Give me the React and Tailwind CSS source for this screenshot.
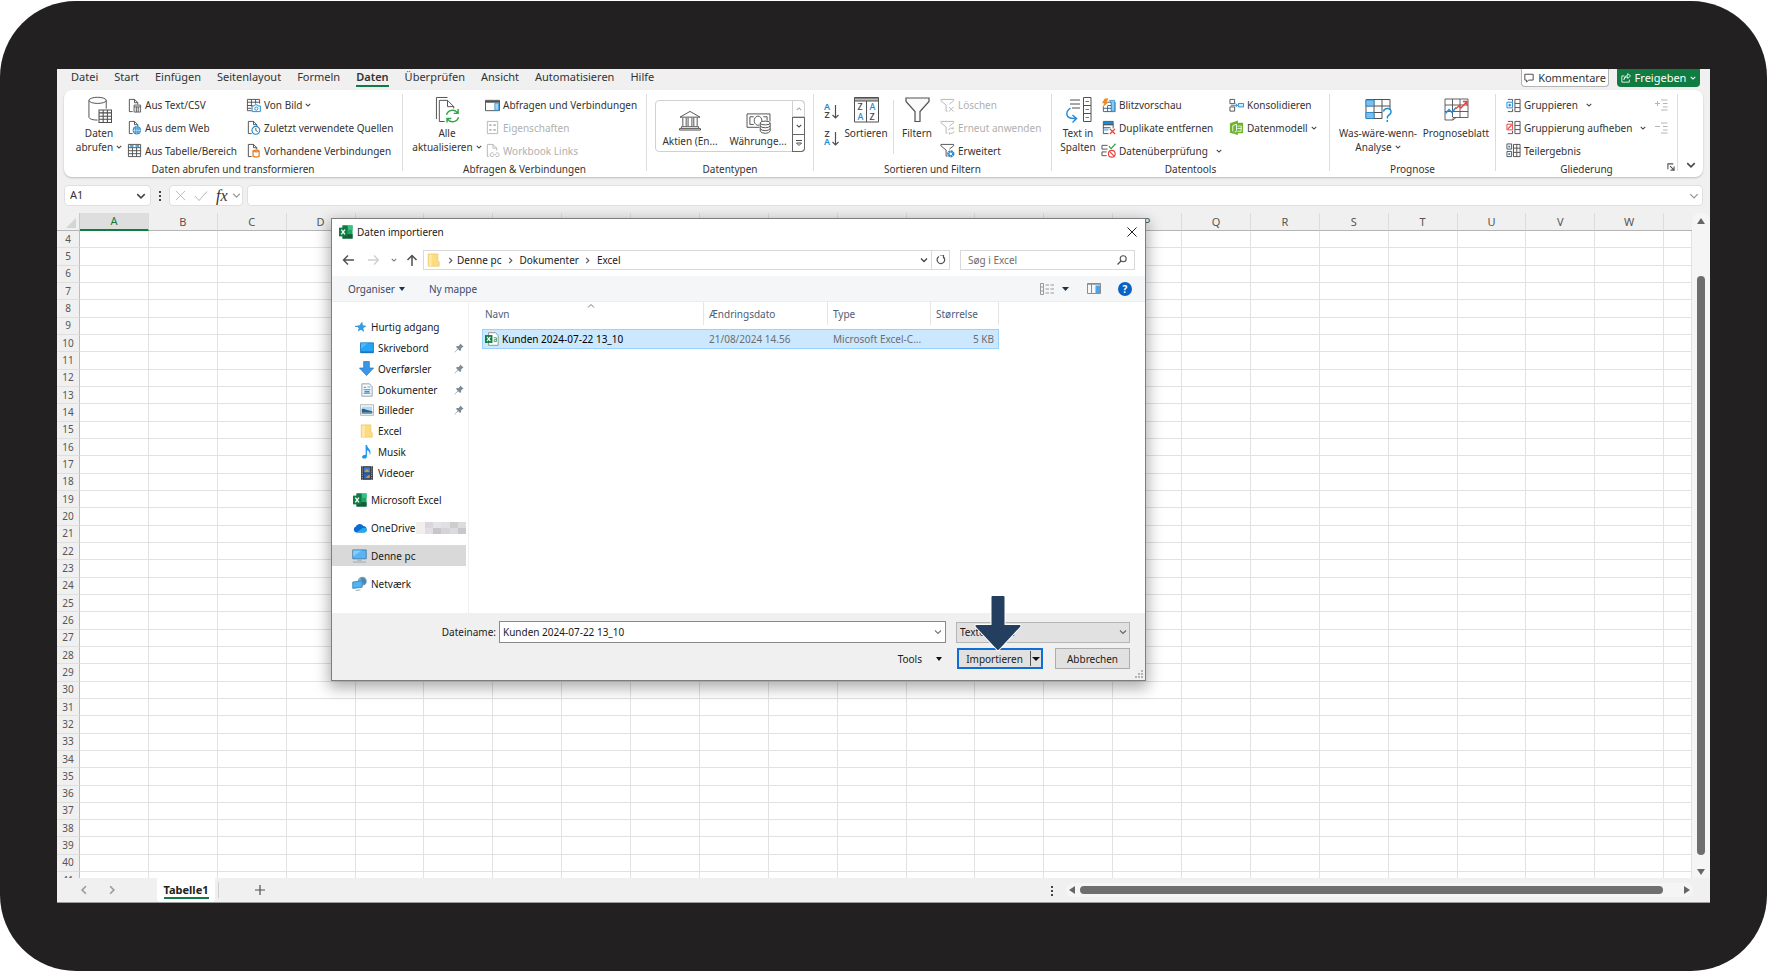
import { useState } from 'react';
import { clsx } from 'clsx';

const TABS = ['Datei', 'Start', 'Einfügen', 'Seitenlayout', 'Formeln', 'Daten', 'Überprüfen', 'Ansicht', 'Automatisieren', 'Hilfe'];
const COLUMNS = 'ABCDEFGHIJKLMNOPQRSTUVW'.split('');
const ROWS = Array.from({ length: 37 }, (_, i) => i + 4);

const DARK = '#505050';
const BLUE = '#1e8bd4';
const GREEN = '#2ea44a';
const RED = '#e8413c';
const LIGHT = '#b5b5b5';

/* ---------- icons ---------- */

function Svg({ box = '0 0 16 16', className = 'size-[15px]', stroke = DARK, children }) {
  return (
    <svg viewBox={box} className={clsx('shrink-0', className)} fill="none" stroke={stroke} aria-hidden="true">
      {children}
    </svg>
  );
}

function Chevron({ className = 'size-[7px]', stroke = '#444', width = 1.4 }) {
  return (
    <Svg box="0 0 8 8" className={className} stroke={stroke}>
      <path d="M1 2.5 4 5.5 7 2.5" strokeWidth={width} />
    </Svg>
  );
}

function ChevronRight({ className = 'size-[7px]', stroke = '#555' }) {
  return (
    <Svg box="0 0 8 8" className={className} stroke={stroke}>
      <path d="M2.5 1 5.5 4 2.5 7" strokeWidth="1.3" />
    </Svg>
  );
}

function Triangle({ className = 'w-[7px] h-[4px]', fill = '#111' }) {
  return (
    <svg viewBox="0 0 8 4" className={clsx('shrink-0', className)} preserveAspectRatio="none" aria-hidden="true">
      <path d="M0 0H8L4 4Z" fill={fill} />
    </svg>
  );
}

const page = <path d="M6 14.5H2.5V1.5H8L11.5 5V7M8 1.5V5H11.5" />;

const IconCsv = () => (
  <Svg>{page}<path d="M7.500 7.500H14.500V15H7.500ZM7.500 9.500H14.500M10 9.500V15M12 9.500V15" fill="#eee" strokeWidth=".9" /></Svg>
);
const IconWeb = () => (
  <Svg>
    {page}
    <circle cx="10.500" cy="11" r="4.500" fill={BLUE} stroke="none" />
    <path d="M6 11H15M10.500 6.500V15.500M8.500 8Q7.500 11 8.500 14M12.500 8Q13.500 11 12.500 14" stroke="#fff" strokeWidth=".6" />
  </Svg>
);
const IconTable = () => (
  <Svg>
    <path d="M1.500 1.500H14.500V14.500H1.500ZM1.500 5H14.500M1.500 8.200H14.500M1.500 11.400H14.500M5.800 5V14.500M10.200 5V14.500" />
    <path d="M3 3.300H7M9 3.300H13" stroke={BLUE} strokeWidth="1.600" />
  </Svg>
);
const IconPicture = () => (
  <Svg>
    <path d="M6 13.500H1.500V1.500H14.500V6M1.500 4.500H14.500M1.500 8H7M1.500 11H6M5.800 1.500V9M10.200 1.500V6" />
    <path d="M6.500 8.500H8.500L9.300 7.300H12L12.800 8.500H15.300V14.500H6.500Z" stroke={BLUE} fill="#fff" />
    <circle cx="11" cy="11.300" r="1.700" stroke={BLUE} />
  </Svg>
);
const IconRecent = () => (
  <Svg>{page}<circle cx="10.500" cy="11" r="4.200" stroke={BLUE} fill="#fff" strokeWidth="1.200" /><path d="M10.500 8.500V11.200L12.300 12.300" /></Svg>
);
const IconConnections = () => (
  <Svg>
    {page}
    <path d="M7.500 8.500V14Q10.800 16 14 14V8.500Q10.800 6.500 7.500 8.500Q10.800 10.500 14 8.500" stroke="#e97a1f" strokeWidth="1.300" fill="#fff" />
  </Svg>
);
const IconDatabase = () => (
  <Svg box="0 0 26 28" className="h-[27px] w-[25px]">
    <ellipse cx="11" cy="4.500" rx="9" ry="3.200" fill="#fafafa" />
    <path d="M2 4.500V22Q3 25 11 25M20 4.500V13" />
    <path d="M12.500 14.500H25.500V27.500H12.500ZM12.500 17.500H25.500M12.500 21H25.500M12.500 24.200H25.500M16.800 14.500V27.500M21.200 14.500V27.500" fill="#fff" strokeWidth="1.100" />
  </Svg>
);
const IconRefresh = () => (
  <Svg box="0 0 26 28" className="h-[27px] w-[25px]">
    <path d="M1.500 24V1.500H13" />
    <path d="M10 26.500H4.500V4.500H13L19.500 11V13M13 4.500V11H19.500" />
    <g stroke={GREEN} strokeWidth="1.500">
      <path d="M12 19.500A6.500 6.500 0 0 1 23.500 17.500M24 13.500V18H19.500" />
      <path d="M24.500 22A6.500 6.500 0 0 1 13 24M12.500 27.500V23.300H17" />
    </g>
  </Svg>
);
const IconQueries = () => (
  <Svg>
    <path d="M.5 2.500H15.500V13.500H.5Z" />
    <path d="M.5 4H15.500" strokeWidth="2" />
    <path d="M10.500 5.500H14.500V13H10.500Z" fill="#a6d3f3" stroke={BLUE} strokeWidth=".8" />
  </Svg>
);
const IconProperties = () => (
  <Svg stroke={LIGHT}>
    <path d="M2.500 1.500H13.500V14.500H2.500Z" />
    <path d="M4.500 5.500H7M4.500 10.500H7M9 5.500H11.500M9 10.500H11.500" strokeWidth="2" />
  </Svg>
);
const IconLinks = () => (
  <Svg stroke={LIGHT}>
    <path d="M4 14.500H2.500V1.500H8.500L12.500 5.500V8M8.500 1.500V5.500H12.500" />
    <path d="M9 10.500H7.500A2 2 0 0 0 7.500 14.500H9M11.500 10.500H13A2 2 0 0 1 13 14.500H11.500M8.500 12.500H12" />
  </Svg>
);
const IconBank = () => (
  <Svg box="0 0 24 22" className="h-[21px] w-[24px]">
    <path d="M1.500 7.500 12 1.500 22.500 7.500ZM3 19V17.500H21V19M1 21H23V19.500H1ZM4.500 8V17M8 8V17M10 8V17M14 8V17M16 8V17M19.500 8V17" />
  </Svg>
);
const IconMoney = () => (
  <Svg box="0 0 26 23" className="h-[22px] w-[25px]">
    <path d="M14 16H1V2H25V10" />
    <path d="M8 5H4V13H8M18 5H22V9" />
    <path d="M14 13.500A4 4.800 0 1 1 16.500 9.500" />
    <ellipse cx="20" cy="11.500" rx="5.200" ry="2" fill="#fff" />
    <path d="M14.800 11.500V20Q16 22.300 20 22.300T25.200 20V11.500M14.800 14.500Q16 16.500 20 16.500T25.200 14.500M14.800 17.300Q16 19.500 20 19.500T25.200 17.300" />
  </Svg>
);
function IconAz({ top, bottom, topFill, bottomFill }) {
  return (
    <span className="flex items-center gap-[2px]">
      <span className="flex flex-col text-[9px] leading-[8px] font-semibold">
        <span className={topFill}>{top}</span>
        <span className={bottomFill}>{bottom}</span>
      </span>
      <Svg box="0 0 7 15" className="h-[15px] w-[7px]">
        <path d="M3.500 1V14M.5 11 3.500 14 6.500 11" strokeWidth="1.200" />
      </Svg>
    </span>
  );
}
const IconSort = () => (
  <Svg box="0 0 25 26" className="h-[26px] w-[25px]">
    <path d="M.5 .5H24.500V25H.5ZM12.500 4V25" />
    <path d="M.5 1H24.500V4H.5Z" fill="#bbb" />
    <g stroke="none" fontFamily="Noto Sans, sans-serif" fontSize="9" fontWeight="500">
      <text x="3.500" y="13" fill="#444">Z</text>
      <text x="3.500" y="22.500" fill={BLUE}>A</text>
      <text x="15.500" y="13" fill={BLUE}>A</text>
      <text x="15.500" y="22.500" fill="#444">Z</text>
    </g>
  </Svg>
);
const IconFilter = () => (
  <Svg box="0 0 25 26" className="h-[26px] w-[25px]">
    <path d="M1 1H24V4.500L15 14.500V24.500H10V14.500L1 4.500Z" fill="#fafafa" strokeWidth="1.200" />
  </Svg>
);
function IconFunnel({ stroke, children }) {
  return (
    <Svg stroke={stroke}>
      <path d="M6.500 14V7.500L1 3V1.500H14.500V3L10 6.500M6.500 14H8" />
      {children}
    </Svg>
  );
}
const IconTextColumns = () => (
  <Svg box="0 0 27 27" className="h-[27px] w-[27px]">
    <path d="M5 4H15M5 8H15M7 12H15" />
    <path d="M18.500 1.500H26V25.500H18.500ZM18.500 9.500H26M18.500 17.500H26" />
    <path d="M20.500 5.500H24M20.500 13.500H24M20.500 21.500H24" stroke={BLUE} />
    <path d="M5.500 12Q1 15 2 19T11 22.500M7.500 19 11.500 22.500 7.500 26.500" stroke={BLUE} strokeWidth="1.400" />
  </Svg>
);
const IconFlash = () => (
  <Svg>
    <path d="M7 4.500H15V14.500H2.500V9M2.500 11H15M7.500 8H15M7 8V14.500M11 4.500V14.500" stroke="#33648c" />
    <path d="M9 2.500H14.500V14H11V5Z" fill="#8cc5ee" stroke={BLUE} strokeWidth=".7" />
    <path d="M4 .5H8L6 4H8.500L1.500 10 3.500 5.500H1Z" fill="#f08a1c" stroke="none" />
  </Svg>
);
const IconDuplicates = () => (
  <Svg>
    <path d="M2.500 1.500H13V5H2.500Z" fill={BLUE} stroke="#1b6ead" />
    <path d="M2.500 5H13V9M2.500 5V14.500H8M2.500 8.200H10" />
    <path d="M3 9H8V11.500H3Z" fill="#8cc5ee" stroke="none" />
    <path d="M9.500 9.500 15 15M15 9.500 9.500 15" stroke={RED} strokeWidth="1.400" />
  </Svg>
);
const IconValidation = () => (
  <Svg>
    <path d="M7 2.500H1V6.500H7M6 9.500H1V13.500H6" />
    <path d="M8.500 3.500 10.800 6 15.500 .8" stroke={GREEN} strokeWidth="1.300" />
    <circle cx="11.500" cy="11.500" r="3.600" stroke={RED} strokeWidth="1.200" />
    <path d="M9 9 14 14" stroke={RED} strokeWidth="1.200" />
  </Svg>
);
const IconConsolidate = () => (
  <Svg>
    <path d="M1 1.500H6V6H1ZM1 9.500H6V14H1Z" />
    <path d="M2 7.800H9M7 5.800 9 7.800 7 9.800" stroke={BLUE} />
    <path d="M10 5.800H15.500V9.500H10Z" stroke={BLUE} fill="#d7ecfb" />
  </Svg>
);
const IconModel = () => (
  <Svg className="size-[15px]">
    <path d="M1 3.500 9.500 .5V3H15V14H9.500V16L1 13.500Z" fill="#6cb52d" stroke="none" />
    <path d="M4 12V6L8 4.500V11Q8 13 6 13M9 6.500H13V12H9M9 9H13" stroke="#fff" strokeWidth=".9" />
  </Svg>
);
const IconWhatIf = () => (
  <Svg box="0 0 27 24" className="h-[24px] w-[27px]">
    <path d="M1 1.500H25V11M1 1.500V20.500H17M1 8H25M1 14.500H17M9 1.500V20.500M17 1.500V20.500" />
    <path d="M1 2H9V8H1ZM1 14.500H9V20.500H1Z" fill="#7fbdee" stroke={BLUE} strokeWidth=".8" />
    <path d="M18.500 13.500Q19 10.500 22.500 10.500T26 14Q26 16 24 17T22.300 20.500M22.300 22V24" stroke={BLUE} strokeWidth="1.500" />
  </Svg>
);
const IconForecast = () => (
  <Svg box="0 0 25 23" className="h-[23px] w-[25px]">
    <path d="M1 1H24V19.500H12L9 22H1ZM1 7H24M1 13.500H24M8.500 1V19M16 1V19.500M9 22V19.500H12" strokeWidth=".9" />
    <path d="M1.500 15.500 5 11.500 8 14.500 12 9.500" stroke={BLUE} strokeWidth="1.300" />
    <path d="M12 10.500 15 8 17 10 23 3.500M19 3.500H23V7.500" stroke={RED} strokeWidth="1.300" />
  </Svg>
);
function IconGroup({ color, ungroup }) {
  return (
    <Svg>
      <path d="M5 1.500H2M2 14.500H5M9.500 1.500H15V14.500H9.500ZM9.500 5.800H15M9.500 10.200H15M5 1.500H7V4M7 11.500V14.500H5" />
      <path d="M1 4.500H7V10.500H1Z" stroke={color} />
      <path d={ungroup ? 'M2 9.500 6 5.500' : 'M4 6V9M2.500 7.500H5.500'} stroke={color} strokeWidth="1.300" />
    </Svg>
  );
}
const IconSubtotal = () => (
  <Svg>
    <path d="M1 1H6V6.500H1ZM1 9H6V14.500H1ZM8 1.500H15V14.500H8ZM8 5.500H15M8 10H15M11.500 1.500V14.500" />
    <path d="M2.500 3.800H4.500M2.500 11.800H4.500" stroke={BLUE} strokeWidth="2" />
  </Svg>
);
function IconDetail({ plus }) {
  return (
    <Svg box="0 0 13 12" className="h-[12px] w-[13px]" stroke={LIGHT}>
      <path d={plus ? 'M0 4.500H5M2.500 2V7' : 'M0 4.500H5'} />
      <path d="M6 1H12.500M8 4.500H12.500M8 8H12.500M6 11H12.500" />
    </Svg>
  );
}

const IconExcel = () => (
  <svg viewBox="0 0 16 16" className="size-[14px] shrink-0" aria-hidden="true">
    <path d="M4 .5H15.500V15.500H4Z" fill="#21a366" />
    <path d="M4 .5H10V5.500H4Z" fill="#107c41" />
    <path d="M10 .5H15.500V5.500H10Z" fill="#33c481" />
    <path d="M4 10.500H15.500V15.500H4Z" fill="#185c37" />
    <path d="M0 3H9.500V13H0Z" fill="#107c41" />
    <path d="M2.700 5.300 6.800 10.700M6.800 5.300 2.700 10.700" stroke="#fff" strokeWidth="1.500" />
  </svg>
);
const IconCsvFile = () => (
  <svg viewBox="0 0 16 16" className="size-[14px] shrink-0" aria-hidden="true">
    <path d="M4 .8H12L15 4V15.200H4Z" fill="#fff" stroke="#8a8a8a" />
    <path d="M0 3.500H8.500V12.500H0Z" fill="#107c41" />
    <path d="M2.300 5.500 6.200 10.500M6.200 5.500 2.300 10.500" stroke="#fff" strokeWidth="1.300" />
    <path d="M10 6.500H13V11H10.500V8.700H13" stroke="#21a366" fill="none" />
  </svg>
);
const IconFolder = () => (
  <svg viewBox="0 0 14 16" className="h-[14px] w-[13px] shrink-0" aria-hidden="true">
    <path d="M1 1H12V9L13.500 10V15H1Z" fill="#fcdc82" stroke="#eec55c" strokeWidth=".8" />
    <path d="M2 2H5V15H2Z" fill="#fee9a9" />
  </svg>
);
const IconStar = () => (
  <svg viewBox="0 0 16 16" className="size-[12px] shrink-0" aria-hidden="true">
    <path d="M9.500 .5 10.500 5.500 15.500 6.500 11.200 9.300 12 14.500 8 11.500 3.500 14 5 9.500 3.500 8H0V6.500L6 5.500Z" fill="#3a9ae0" />
  </svg>
);
const IconDesktop = () => (
  <svg viewBox="0 0 16 14" className="h-[12px] w-[14px] shrink-0" aria-hidden="true">
    <path d="M.5 1H15.500V12.500H.5Z" fill="#27a5f5" stroke="#0c74c4" />
    <path d="M1 11.700H15" stroke="#0a5ea3" />
    <path d="M1 8 9 1.500H1Z" fill="#4bb9fb" />
  </svg>
);
const IconDownload = () => (
  <svg viewBox="0 0 16 16" className="size-[15px] shrink-0" aria-hidden="true">
    <path d="M5 .5H11V7.500H15.500L8 15.500 .5 7.500H5Z" fill="#3a97e8" stroke="#2179c9" strokeWidth=".8" />
  </svg>
);
const IconDocument = () => (
  <svg viewBox="0 0 14 16" className="h-[14px] w-[12px] shrink-0" aria-hidden="true">
    <path d="M1 .8H10L13 4V15.200H1Z" fill="#f6f8fa" stroke="#8b949c" />
    <path d="M3 5H6M7.500 4.500H11M3 7.500H11M3 12H11" stroke="#5baede" strokeWidth="1.300" />
    <path d="M4 9H10V11H4Z" fill="#3d94d3" />
  </svg>
);
const IconImages = () => (
  <svg viewBox="0 0 16 13" className="h-[12px] w-[14px] shrink-0" aria-hidden="true">
    <path d="M.5 .5H15.500V12.500H.5Z" fill="#fff" stroke="#a3a8ad" />
    <path d="M2 2.500H14V10.500H2Z" fill="#b5d8f0" />
    <path d="M2 5Q5 5 8 6.500L14 8V10.500H2Z" fill="#2c5f80" />
    <path d="M2 9H14V10.500H2Z" fill="#5f9ab8" />
  </svg>
);
const IconMusic = () => (
  <svg viewBox="0 0 12 16" className="h-[14px] w-[11px] shrink-0" aria-hidden="true">
    <path d="M5 0H6.500Q7 3 9 4.500T10.500 10L9.500 11Q10 7 6.500 6V12.500Q6.300 15.500 3.500 15.500T1 13Q1.500 11 5 11Z" fill="#1b96f0" />
  </svg>
);
const IconVideo = () => (
  <svg viewBox="0 0 14 16" className="h-[14px] w-[12px] shrink-0" aria-hidden="true">
    <path d="M0 0H14V16H0Z" fill="#3d3d45" />
    <path d="M1.500 0V16M12.500 0V16" stroke="#b9bcc2" strokeDasharray="1.500 1" />
    <path d="M3.500 1.500H10.500V7.500H3.500Z" fill="#3f7fd1" />
    <path d="M3.500 8.500H10.500V14.500H3.500Z" fill="#2e63a8" />
    <path d="M4 6.500 7 3.500 10 6.500ZM5 13.500 10 10V13.500Z" fill="#e0a23c" />
  </svg>
);
const IconCloud = () => (
  <svg viewBox="0 0 16 11" className="h-[10px] w-[14px] shrink-0" aria-hidden="true">
    <path d="M3.500 10.500A3.300 3.300 0 0 1 3 4.200 4.800 4.800 0 0 1 11.800 3.300 3.700 3.700 0 0 1 13 10.500Z" fill="#0a6ccf" />
    <path d="M3.500 10.500 11.500 5.300Q15.800 5 15.900 8 15.500 10.500 13 10.500Z" fill="#28a8ea" />
  </svg>
);
const IconPc = () => (
  <svg viewBox="0 0 16 15" className="h-[14px] w-[15px] shrink-0" aria-hidden="true">
    <path d="M.8 1H15.200V10.500H.8Z" fill="#55b6f7" stroke="#4a7da3" />
    <path d="M1.300 8 10 1.500H1.300Z" fill="#86cefb" />
    <path d="M5.500 12H10.500M1 14H15" stroke="#9aa7b2" />
  </svg>
);
const IconNetwork = () => (
  <svg viewBox="0 0 16 16" className="size-[15px] shrink-0" aria-hidden="true">
    <circle cx="11" cy="5.500" r="4.800" fill="#79a9c9" />
    <path d="M9 2Q13 1 14.500 4T13 9.500Z" fill="#4f86ad" />
    <path d="M.8 6.500 10.800 5V12L.8 13.200Z" fill="#4eb4f2" stroke="#3c7fae" strokeWidth=".9" />
    <path d="M4 15.500 9 14.700" stroke="#8fa0ad" />
  </svg>
);
const IconPin = () => (
  <svg viewBox="0 0 12 12" className="size-[10px] shrink-0" aria-hidden="true">
    <path d="M7.500 .5 11.500 4.500 10 5 8.500 6.500 8.500 9 6.800 9.300 5 7.500 .8 11.500 .5 11.200 4.500 7 2.700 5.200 3 3.500H5.500L7 2Z" fill="#7f8c96" />
  </svg>
);

/* ---------- ribbon ---------- */

function Group({ label, width, launcher, children }) {
  return (
    <section className={clsx('relative flex shrink-0 flex-col border-r border-[#dcdcdc]', width)}>
      <div className="flex h-[68px] shrink-0">{children}</div>
      <div className="flex h-[14px] shrink-0 items-center justify-center text-[10px] leading-[14px]">
        {label}
      </div>
      {launcher && (
        <button aria-label="Gliederungseinstellungen" className="absolute right-[2px] bottom-0">
          <Svg box="0 0 9 9" className="size-[8px]">
            <path d="M1 7V1H7M3.500 3.500 7.500 7.500M8 4V8H4" strokeWidth="1.200" />
          </Svg>
        </button>
      )}
    </section>
  );
}

function BigButton({ icon, lines, width, arrow }) {
  return (
    <button className={clsx('flex shrink-0 flex-col items-center pt-[2px] text-[10px] leading-[14px] whitespace-nowrap', width)}>
      <span className="mb-[3px] flex h-[27px] items-center">{icon}</span>
      {lines.map((line, i) => (
        <span key={line} className="flex items-center gap-[3px]">
          {line}
          {arrow && i === lines.length - 1 && <Chevron className="size-[6px]" />}
        </span>
      ))}
    </button>
  );
}

function SmallButton({ icon, label, arrow, disabled }) {
  return (
    <button disabled={disabled} className={clsx('flex items-center gap-[3px] text-[10px] leading-[14px] whitespace-nowrap', disabled && 'text-[#b0b0b0]')}>
      {icon}
      {label}
      {arrow && <Chevron className={clsx('size-[6px]', arrow === 'far' && 'ml-[5px]')} />}
    </button>
  );
}

function Stack({ width, children }) {
  return <div className={clsx('grid shrink-0 grid-rows-3', width)}>{children}</div>;
}

function Ribbon() {
  return (
    <div className="mx-[7px] flex h-[87px] rounded-lg bg-white pt-[4px] pb-[6px] shadow-[0_1px_2px_rgba(0,0,0,0.22)]">
      <Group label="Daten abrufen und transformieren" width="w-[339px]">
        <BigButton icon={<IconDatabase />} lines={['Daten', 'abrufen']} width="ml-[7px] w-[56px]" arrow />
        <Stack width="w-[119px]">
          <SmallButton icon={<IconCsv />} label="Aus Text/CSV" />
          <SmallButton icon={<IconWeb />} label="Aus dem Web" />
          <SmallButton icon={<IconTable />} label="Aus Tabelle/Bereich" />
        </Stack>
        <Stack width="w-[150px]">
          <SmallButton icon={<IconPicture />} label="Von Bild" arrow />
          <SmallButton icon={<IconRecent />} label="Zuletzt verwendete Quellen" />
          <SmallButton icon={<IconConnections />} label="Vorhandene Verbindungen" />
        </Stack>
      </Group>

      <Group label="Abfragen & Verbindungen" width="w-[244px]">
        <BigButton icon={<IconRefresh />} lines={['Alle', 'aktualisieren']} width="ml-[6px] w-[76px]" arrow />
        <Stack width="w-[150px]">
          <SmallButton icon={<IconQueries />} label="Abfragen und Verbindungen" />
          <SmallButton icon={<IconProperties />} label="Eigenschaften" disabled />
          <SmallButton icon={<IconLinks />} label="Workbook Links" disabled />
        </Stack>
      </Group>

      <Group label="Datentypen" width="w-[167px]">
        <div className="mt-[6px] ml-[8px] flex h-[52px] w-[150px] rounded border border-[#d0d0d0]">
          <button className="flex w-[68px] flex-col items-center pt-[6px] text-[10px] leading-[14px] whitespace-nowrap">
            <span className="flex h-[27px] items-center">
              <IconBank />
            </span>
            Aktien (En...
          </button>
          <button className="flex w-[68px] flex-col items-center pt-[6px] text-[10px] leading-[14px] whitespace-nowrap">
            <span className="flex h-[27px] items-end">
              <IconMoney />
            </span>
            Währunge...
          </button>
          <div className="-my-px -mr-px grid flex-1 grid-rows-3">
            <button aria-label="Nach oben" className="flex items-center justify-center rounded-tr border border-[#d0d0d0]">
              <Chevron className="size-[6px] rotate-180" stroke="#aaa" />
            </button>
            <button aria-label="Nach unten" className="flex items-center justify-center border border-[#666]">
              <Chevron className="size-[6px]" />
            </button>
            <button aria-label="Mehr" className="flex items-center justify-center rounded-br border border-t-0 border-[#666]">
              <Svg box="0 0 8 8" className="size-[8px]">
                <path d="M1 1.500H7M1.500 4 4 6.500 6.500 4Z" />
              </Svg>
            </button>
          </div>
        </div>
      </Group>

      <Group label="Sortieren und Filtern" width="w-[238px]">
        <div className="ml-[10px] flex w-[18px] flex-col items-start gap-[11px] pt-[9px]">
          <button aria-label="Von A bis Z sortieren"><IconAz top="A" bottom="Z" topFill="text-[#1e8bd4]" bottomFill="text-[#444]" /></button>
          <button aria-label="Von Z bis A sortieren"><IconAz top="Z" bottom="A" topFill="text-[#444]" bottomFill="text-[#1e8bd4]" /></button>
        </div>
        <BigButton icon={<IconSort />} lines={['Sortieren']} width="w-[48px]" />
        <div className="mt-[6px] ml-[3px] h-[54px] w-px bg-[#dcdcdc]" />
        <BigButton icon={<IconFilter />} lines={['Filtern']} width="w-[46px]" />
        <Stack width="w-[100px]">
          <SmallButton icon={<IconFunnel stroke={LIGHT}><path d="M9.500 9.500 14.500 14.500M14.500 9.500 9.500 14.500" /></IconFunnel>} label="Löschen" disabled />
          <SmallButton icon={<IconFunnel stroke={LIGHT}><path d="M9 11A3 3 0 0 1 14 9.500V7.500M15 12A3 3 0 0 1 10 13.500V15.500" /></IconFunnel>} label="Erneut anwenden" disabled />
          <SmallButton icon={<IconFunnel stroke={DARK}><circle cx="11.500" cy="11.500" r="2.800" stroke={BLUE} strokeWidth="2.200" strokeDasharray="2 .6" /><circle cx="11.500" cy="11.500" r="2" stroke={BLUE} /></IconFunnel>} label="Erweitert" />
        </Stack>
      </Group>

      <Group label="Datentools" width="w-[278px]">
        <BigButton icon={<IconTextColumns />} lines={['Text in', 'Spalten']} width="ml-[3px] w-[46px]" />
        <Stack width="w-[128px]">
          <SmallButton icon={<IconFlash />} label="Blitzvorschau" />
          <SmallButton icon={<IconDuplicates />} label="Duplikate entfernen" />
          <SmallButton icon={<IconValidation />} label="Datenüberprüfung" arrow="far" />
        </Stack>
        <Stack width="w-[90px]">
          <SmallButton icon={<IconConsolidate />} label="Konsolidieren" />
          <SmallButton icon={<IconModel />} label="Datenmodell" arrow />
        </Stack>
      </Group>

      <Group label="Prognose" width="w-[166px]">
        <BigButton icon={<IconWhatIf />} lines={['Was-wäre-wenn-', 'Analyse']} width="ml-[5px] w-[86px]" arrow />
        <BigButton icon={<IconForecast />} lines={['Prognoseblatt']} width="w-[70px]" />
      </Group>

      <Group label="Gliederung" width="w-[182px]" launcher>
        <Stack width="ml-[10px] w-[149px]">
          <SmallButton icon={<IconGroup color={BLUE} />} label="Gruppieren" arrow="far" />
          <SmallButton icon={<IconGroup color={RED} ungroup />} label="Gruppierung aufheben" arrow="far" />
          <SmallButton icon={<IconSubtotal />} label="Teilergebnis" />
        </Stack>
        <Stack width="w-[14px]">
          <button disabled aria-label="Detail anzeigen"><IconDetail plus /></button>
          <button disabled aria-label="Detail ausblenden"><IconDetail /></button>
        </Stack>
      </Group>

      <button aria-label="Menüband reduzieren" className="flex flex-1 items-end justify-center pb-[1px]">
        <Chevron className="size-[10px]" width={1.2} />
      </button>
    </div>
  );
}

function MenuBar() {
  return (
    <div className="flex h-[21px] items-start justify-between pr-[10px] pl-[14px]">
      <nav className="flex gap-[16px] text-[11px] leading-[16px]">
        {TABS.map((tab) => (
          <button key={tab} className={clsx('h-[18px] border-b-2', tab === 'Daten' ? 'border-[#107c41] font-semibold' : 'border-transparent')}>
            {tab}
          </button>
        ))}
      </nav>
      <div className="flex gap-[8px] text-[11px] leading-[16px]">
        <button className="flex h-[18px] w-[88px] items-center justify-center gap-[4px] rounded-b border border-t-0 border-[#b5b5b5] bg-white">
          <Svg box="0 0 12 12" className="size-[10px]">
            <path d="M1 1.500H11V8.500H5.500L3 11V8.500H1Z" strokeWidth="1.200" />
          </Svg>
          Kommentare
        </button>
        <button className="flex h-[18px] w-[83px] items-center justify-center gap-[4px] rounded-b bg-[#107c41] text-white">
          <Svg box="0 0 12 12" className="size-[10px]" stroke="#fff">
            <path d="M4 3.500H1V11H10V8M3.500 8Q4 4.500 8 4.500V6.500L11.500 3.500 8 .8V2.800Q4 3 3.500 8Z" />
          </Svg>
          Freigeben
          <Chevron className="size-[6px]" stroke="#fff" />
        </button>
      </div>
    </div>
  );
}

function FormulaBar() {
  return (
    <div className="mx-[7px] mt-[8px] mb-[7px] flex h-[21px] items-center">
      <div className="flex h-full w-[87px] items-center rounded border border-[#e0e0e0] bg-white pr-[4px] pl-[5px]">
        <input aria-label="Namenfeld" defaultValue="A1" className="w-0 flex-1 text-[11px] outline-none" />
        <Chevron className="size-[10px]" width={1.2} />
      </div>
      <div className="flex w-[18px] flex-col items-center gap-[2px]">
        <i className="size-[2px] bg-[#444]" />
        <i className="size-[2px] bg-[#444]" />
        <i className="size-[2px] bg-[#444]" />
      </div>
      <div className="flex h-full w-[74px] items-center justify-between rounded border border-[#e0e0e0] bg-white pr-[1px] pl-[5px]">
        <button aria-label="Abbrechen">
          <Svg box="0 0 12 12" className="size-[11px]" stroke="#b8b8b8"><path d="M1 1 11 11M11 1 1 11" /></Svg>
        </button>
        <button aria-label="Eingeben" className="ml-[4px]">
          <Svg box="0 0 14 12" className="h-[12px] w-[14px]" stroke="#b8b8b8"><path d="M1 6 5 10.500 13 1.500" /></Svg>
        </button>
        <button className="ml-[3px] font-['Liberation_Serif',serif] text-[16px] leading-none text-[#333] italic">fx</button>
        <Chevron className="size-[9px]" stroke="#999" width={1.1} />
      </div>
      <div className="ml-[4px] flex h-full flex-1 items-center rounded border border-[#e0e0e0] bg-white pr-[3px]">
        <input aria-label="Bearbeitungsleiste" className="flex-1 outline-none" />
        <Chevron className="size-[10px]" stroke="#999" width={1.1} />
      </div>
    </div>
  );
}

/* ---------- sheet ---------- */

function Sheet() {
  return (
    <div className="flex min-h-0 flex-1">
      <table className="flex min-w-0 flex-1 flex-col overflow-hidden text-[10px] text-[#555]">
        <thead className="block">
          <tr className="flex h-[18px]">
            <th aria-label="Alles auswählen" className="flex w-[23px] items-end justify-end border-r border-b border-[#b5b5b5] border-r-[#c8c8c8] pr-[3px] pb-[2px]">
              <svg viewBox="0 0 10 10" className="size-[10px]"><path d="M10 0V10H0Z" fill="#d4d4d4" /></svg>
            </th>
            {COLUMNS.map((c) => (
              <th
                key={c}
                className={clsx(
                  'flex flex-1 items-center justify-center border-r text-[11px] leading-[14px] font-normal',
                  c === 'A' ? 'border-b-2 border-r-[#dadada] border-b-[#107c41] bg-[#dedede] text-[#107c41]' : 'border-b border-r-[#dcdcdc] border-b-[#b5b5b5]'
                )}
              >
                {c}
              </th>
            ))}
            <th className="w-[28px] border-b border-[#b5b5b5]" />
          </tr>
        </thead>
        <tbody className="flex min-h-0 flex-1 flex-col">
          {ROWS.map((r) => (
            <tr key={r} className="flex min-h-0 flex-1">
              <th scope="row" className="flex w-[23px] items-center justify-center border-r border-b border-[#dfdfdf] border-r-[#bdbdbd] font-normal">
                {r}
              </th>
              {COLUMNS.map((c) => (
                <td key={c} className="flex-1 border-r border-b border-[#e2e2e2] bg-white" />
              ))}
              <td className="w-[28px] border-r border-b border-[#e2e2e2] bg-white" />
            </tr>
          ))}
          <tr className="flex h-[6px] shrink-0 overflow-hidden">
            <th scope="row" className="w-[23px] border-r border-[#bdbdbd] text-center leading-[16px] font-normal">41</th>
            {COLUMNS.map((c) => (
              <td key={c} className="flex-1 border-r border-[#e2e2e2] bg-white" />
            ))}
            <td className="w-[28px] border-r border-[#e2e2e2] bg-white" />
          </tr>
        </tbody>
      </table>
      <div className="flex w-[18px] flex-col items-center rounded-t-lg bg-[#f5f5f5] pt-[5px] pb-[3px]">
        <Triangle className="h-[6px] w-[8px] rotate-180" fill="#666" />
        <div className="mt-[52px] w-[8px] flex-1 rounded-full bg-[#6e6e6e]" />
        <Triangle className="mt-[14px] h-[6px] w-[8px]" fill="#666" />
      </div>
    </div>
  );
}

function SheetBar() {
  return (
    <div className="flex h-[25px] shrink-0 items-center border-b border-[#9c9c9c]">
      <button aria-label="Vorheriges Blatt" className="ml-[22px]"><ChevronRight className="size-[10px] rotate-180" stroke="#999" /></button>
      <button aria-label="Nächstes Blatt" className="ml-[18px]"><ChevronRight className="size-[10px]" stroke="#999" /></button>
      <button className="ml-[40px] flex h-full w-[58px] items-start justify-center rounded-b bg-white pt-[4px] text-[11px] leading-[15px] font-bold text-[#222]">
        <span className="border-b-2 border-[#107c41]">Tabelle1</span>
      </button>
      <i className="ml-[3px] h-[16px] w-px bg-[#d0d0d0]" />
      <button aria-label="Neues Blatt" className="ml-[36px]">
        <Svg box="0 0 10 10" className="size-[10px]"><path d="M5 0V10M0 5H10" strokeWidth="1.200" /></Svg>
      </button>
      <div className="ml-auto flex flex-col gap-[2px] pt-[2px]">
        <i className="size-[2px] bg-[#444]" />
        <i className="size-[2px] bg-[#444]" />
        <i className="size-[2px] bg-[#444]" />
      </div>
      <div className="mr-[17px] ml-[13px] flex h-[14px] w-[39%] max-w-[627px] items-center rounded-full bg-[#f5f5f5] px-[2px]">
        <Triangle className="h-[6px] w-[8px] rotate-90" fill="#666" />
        <div className="mr-[20px] ml-[4px] h-[8px] flex-1 rounded-full bg-[#6e6e6e]" />
        <Triangle className="h-[6px] w-[8px] -rotate-90" fill="#666" />
      </div>
    </div>
  );
}

/* ---------- import dialog ---------- */

const QUICK = [
  { label: 'Skrivebord', icon: <IconDesktop />, pinned: true },
  { label: 'Overførsler', icon: <IconDownload />, pinned: true },
  { label: 'Dokumenter', icon: <IconDocument />, pinned: true },
  { label: 'Billeder', icon: <IconImages />, pinned: true },
  { label: 'Excel', icon: <IconFolder /> },
  { label: 'Musik', icon: <IconMusic /> },
  { label: 'Videoer', icon: <IconVideo /> },
];

const BLURRED = ['#f3efef', '#d8d8dc', '#e4e3e6', '#dfe0e4', '#cfccc9', '#dcdcdf', '#f3efef', '#dfdfe3', '#c9c5ca', '#d4d3d8', '#dcdadd', '#c9c7ca'];

function SideItem({ icon, label, pinned, indent, active, children }) {
  return (
    <li className={clsx('flex', indent ? 'flex-1' : 'h-[21px]', active && 'mr-[2px] bg-[#d9d9d9]')}>
      <button className={clsx('flex flex-1 items-center pr-[4px] whitespace-nowrap', indent ? 'pl-[27px]' : 'pl-[20px]')}>
        <span className={clsx('flex justify-center', indent ? 'mr-[4px] w-[15px]' : 'mr-[4px] w-[15px]')}>{icon}</span>
        {label}
        {children}
        {pinned && <span className="ml-auto"><IconPin /></span>}
      </button>
    </li>
  );
}

function Sidebar() {
  return (
    <aside className="w-[137px] shrink-0 border-r border-[#f0f0f0] pt-[15px]">
      <ul className="flex h-[166px] flex-col">
        <li className="flex flex-1">
          <button className="flex flex-1 items-center pl-[23px]">
            <span className="mr-[4px]"><IconStar /></span>
            Hurtig adgang
          </button>
        </li>
        {QUICK.map((q) => <SideItem key={q.label} {...q} indent />)}
      </ul>
      <ul className="mt-[6px] flex flex-col gap-[7px]">
        <SideItem icon={<IconExcel />} label="Microsoft Excel" />
        <SideItem icon={<IconCloud />} label="OneDrive">
          <span className="ml-[1px] grid h-[12px] w-[50px] shrink-0 grid-cols-6">
            {BLURRED.map((c, i) => <i key={i} style={{ background: c }} />)}
          </span>
        </SideItem>
        <SideItem icon={<IconPc />} label="Denne pc" active />
        <SideItem icon={<IconNetwork />} label="Netværk" />
      </ul>
    </aside>
  );
}

function FileList() {
  return (
    <div className="flex-1 pl-[13px]">
      <table className="w-[517px] table-fixed border-separate border-spacing-0 text-left">
        <colgroup>
          <col className="w-[222px]" />
          <col className="w-[124px]" />
          <col className="w-[103px]" />
          <col className="w-[68px]" />
        </colgroup>
        <thead className="text-[#4c607a]">
          <tr className="h-[23px]">
            <th className="relative border-r border-[#e5e5e5] pl-[3px] font-normal">
              Navn
              <Chevron className="absolute top-0 left-[105px] size-[8px] rotate-180" stroke="#777" width={1} />
            </th>
            <th className="border-r border-[#e5e5e5] pl-[5px] font-normal">Ændringsdato</th>
            <th className="border-r border-[#e5e5e5] pl-[5px] font-normal">Type</th>
            <th className="border-r border-[#e5e5e5] pl-[5px] font-normal">Størrelse</th>
          </tr>
        </thead>
        <tbody>
          <tr><td colSpan={4} className="h-[4px]" /></tr>
          <tr className="h-[20px] text-[#6d6d6d]">
            <td className="border-y border-l border-[#99d1ff] bg-[#cce8ff] pl-[2px] text-black">
              <span className="flex items-center gap-[3px]">
                <IconCsvFile />
                Kunden 2024-07-22 13_10
              </span>
            </td>
            <td className="border-y border-[#99d1ff] bg-[#cce8ff] pl-[5px]">21/08/2024 14.56</td>
            <td className="border-y border-[#99d1ff] bg-[#cce8ff] pl-[5px] whitespace-nowrap">Microsoft Excel-C...</td>
            <td className="border-y border-r border-[#99d1ff] bg-[#cce8ff] pr-[4px] text-right">5 KB</td>
          </tr>
        </tbody>
      </table>
    </div>
  );
}

function ImportDialog() {
  const [name, setName] = useState('Kunden 2024-07-22 13_10');

  return (
    <div
      role="dialog"
      aria-label="Daten importieren"
      className="absolute top-[149px] left-[274px] flex w-[815px] flex-col border border-[#7d7d7d] bg-white text-[10px] leading-[14px] text-[#1a1a1a] shadow-[0_5px_14px_2px_rgba(0,0,0,0.32)]"
    >
      <header className="flex h-[25px] items-center pr-[8px] pl-[7px]">
        <IconExcel />
        <h1 className="ml-[4px] flex-1">Daten importieren</h1>
        <button aria-label="Schließen">
          <Svg box="0 0 10 10" className="size-[10px]" stroke="#222"><path d="M.5 .5 9.500 9.500M9.500 .5 .5 9.500" /></Svg>
        </button>
      </header>

      <div className="mt-[6px] flex h-[20px] items-center pr-[10px] pl-[10px]">
        <button aria-label="Zurück">
          <Svg box="0 0 12 12" className="size-[12px]"><path d="M12 6H1.500M6 1.500 1.500 6 6 10.500" strokeWidth="1.400" /></Svg>
        </button>
        <button aria-label="Vorwärts" className="ml-[14px]">
          <Svg box="0 0 12 12" className="size-[12px]" stroke="#cfcfcf"><path d="M0 6H10.500M6 1.500 10.500 6 6 10.500" strokeWidth="1.300" /></Svg>
        </button>
        <button aria-label="Verlauf" className="ml-[11px]"><Chevron className="size-[6px]" stroke="#777" /></button>
        <button aria-label="Nach oben" className="ml-[9px]">
          <Svg box="0 0 12 12" className="size-[12px]"><path d="M6 12V1.500M1.500 6 6 1.500 10.500 6" strokeWidth="1.500" /></Svg>
        </button>
        <div className="ml-[5px] flex h-full flex-1 items-center border border-[#d9d9d9] pl-[3px]">
          <IconFolder />
          <span className="ml-[3px] flex w-[14px] justify-center"><ChevronRight /></span>
          <button>Denne pc</button>
          <span className="flex w-[18px] justify-center"><ChevronRight /></span>
          <button>Dokumenter</button>
          <span className="flex w-[18px] justify-center"><ChevronRight /></span>
          <button>Excel</button>
          <button aria-label="Pfadliste" className="mr-[3px] ml-auto"><Chevron className="size-[8px]" width={1.3} /></button>
          <button aria-label="Aktualisieren" className="flex h-full w-[18px] items-center justify-center border-l border-[#d9d9d9]">
            <Svg box="0 0 10 10" className="size-[10px]"><path d="M3 1.500A3.800 3.800 0 1 0 7.500 2M4 0H7.500M7.500 -.5V3.500" strokeWidth="1.200" /></Svg>
          </button>
        </div>
        <div className="ml-[10px] flex h-full w-[175px] items-center border border-[#d9d9d9] pr-[7px] pl-[7px]">
          <input type="search" aria-label="Søg i Excel" placeholder="Søg i Excel" className="w-0 flex-1 outline-none placeholder:text-[#6d6d6d]" />
          <Svg box="0 0 10 10" className="size-[10px]"><circle cx="6.200" cy="3.800" r="3" strokeWidth="1.100" /><path d="M4 6 .5 9.500" strokeWidth="1.300" /></Svg>
        </div>
      </div>

      <div className="mt-[6px] flex h-[26px] items-center border-b border-[#ececec] bg-[#f5f6f7] pr-[13px] pl-[16px] text-[#3a4a6b]">
        <button className="flex items-center gap-[4px]">
          Organiser
          <Triangle className="h-[4px] w-[6px]" fill="#1e3250" />
        </button>
        <button className="ml-[24px]">Ny mappe</button>
        <button aria-label="Visning" className="ml-auto flex items-center gap-[8px]">
          <Svg box="0 0 14 12" className="h-[12px] w-[14px]" stroke="#9a9a9a">
            <path d="M.5 .5H3.500V11.500H.5ZM.5 4H3.500M.5 8H3.500" />
            <path d="M5.500 2H9M5.500 6H9M5.500 10H9M10.500 2H14M10.500 6H14M10.500 10H14" strokeWidth="1.200" />
          </Svg>
          <Triangle fill="#1e3250" />
        </button>
        <button aria-label="Vorschaufenster" className="ml-[18px]">
          <Svg box="0 0 14 11" className="h-[11px] w-[14px]" stroke="#8d8d8d">
            <path d="M.5 .5H13.500V10.500H.5ZM4.500 1V10" />
            <path d="M.5 1H13.500" strokeWidth="1.500" />
            <path d="M8.500 2.500H13V10H8.500Z" fill="#4aa3ea" stroke="none" />
          </Svg>
        </button>
        <button aria-label="Hilfe" className="ml-[17px] flex size-[14px] items-center justify-center rounded-full bg-[#0a63c2] text-[10px] font-bold text-white">?</button>
      </div>

      <div className="flex h-[311px]">
        <Sidebar />
        <FileList />
      </div>

      <footer className="relative flex h-[67px] flex-col bg-[#f0f0f0] pt-[8px] pr-[15px]">
        <div className="flex h-[22px] items-center justify-end">
          <label htmlFor="dateiname">Dateiname:</label>
          <div className="ml-[3px] flex h-full w-[447px] items-center border border-[#8a8a8a] bg-white pr-[3px] pl-[3px]">
            <input id="dateiname" value={name} onChange={(e) => setName(e.target.value)} className="w-0 flex-1 outline-none" />
            <Chevron className="size-[8px]" stroke="#777" width={1.1} />
          </div>
          <div className="relative ml-[10px] h-[21px] w-[174px]">
            <select aria-label="Dateityp" className="h-full w-full appearance-none border border-[#b5b5b5] bg-[#e1e1e1] pl-[3px] leading-[14px]">
              <option>Textdateien</option>
            </select>
            <Chevron className="pointer-events-none absolute top-[6px] right-[3px] size-[8px]" stroke="#666" width={1.1} />
          </div>
        </div>
        <div className="mt-[5px] flex h-[21px] items-center justify-end">
          <button className="flex items-center gap-[14px]">
            Tools
            <Triangle className="h-[4px] w-[6px]" />
          </button>
          <div className="ml-[15px] flex h-full w-[86px] border-2 border-[#0f6fd6] bg-[#e1e1e1]">
            <button className="flex-1">Importieren</button>
            <button aria-label="Importoptionen" className="my-px flex w-[11px] items-center justify-end border-l border-[#555] pr-px">
              <Triangle className="h-[4px] w-[8px]" />
            </button>
          </div>
          <button className="ml-[12px] h-full w-[75px] border border-[#adadad] bg-[#e1e1e1]">Abbrechen</button>
        </div>
        <svg viewBox="0 0 8 8" className="absolute right-[2px] bottom-[2px] size-[8px]" fill="#b5b5b5" aria-hidden="true">
          <path d="M6 0H8V2H6ZM3 3H5V5H3ZM6 3H8V5H6ZM0 6H2V8H0ZM3 6H5V8H3ZM6 6H8V8H6Z" />
        </svg>
        <svg viewBox="0 0 50 58" className="pointer-events-none absolute right-[122px] bottom-[28px] h-[58px] w-[50px]" aria-hidden="true">
          <path d="M19.500 3H30.500V32H46.500L25 55 3.500 32H19.500Z" fill="#243e5f" stroke="#fff" strokeWidth="4" strokeLinejoin="round" />
          <path d="M19.500 3H30.500V32H46.500L25 55 3.500 32H19.500Z" fill="#243e5f" stroke="#243e5f" strokeWidth="2" strokeLinejoin="round" />
        </svg>
      </footer>
    </div>
  );
}

export default function App() {
  return (
    <div className="h-screen bg-white pt-px font-['Noto_Sans',sans-serif] text-[#333]">
      <div className="h-full rounded-[76px] bg-[#232021] px-[57px] pt-[68px] pb-[68px]">
        <main className="relative flex h-full flex-col bg-[#f0f0f0]">
          <MenuBar />
          <Ribbon />
          <FormulaBar />
          <Sheet />
          <SheetBar />
          <ImportDialog />
        </main>
      </div>
    </div>
  );
}
